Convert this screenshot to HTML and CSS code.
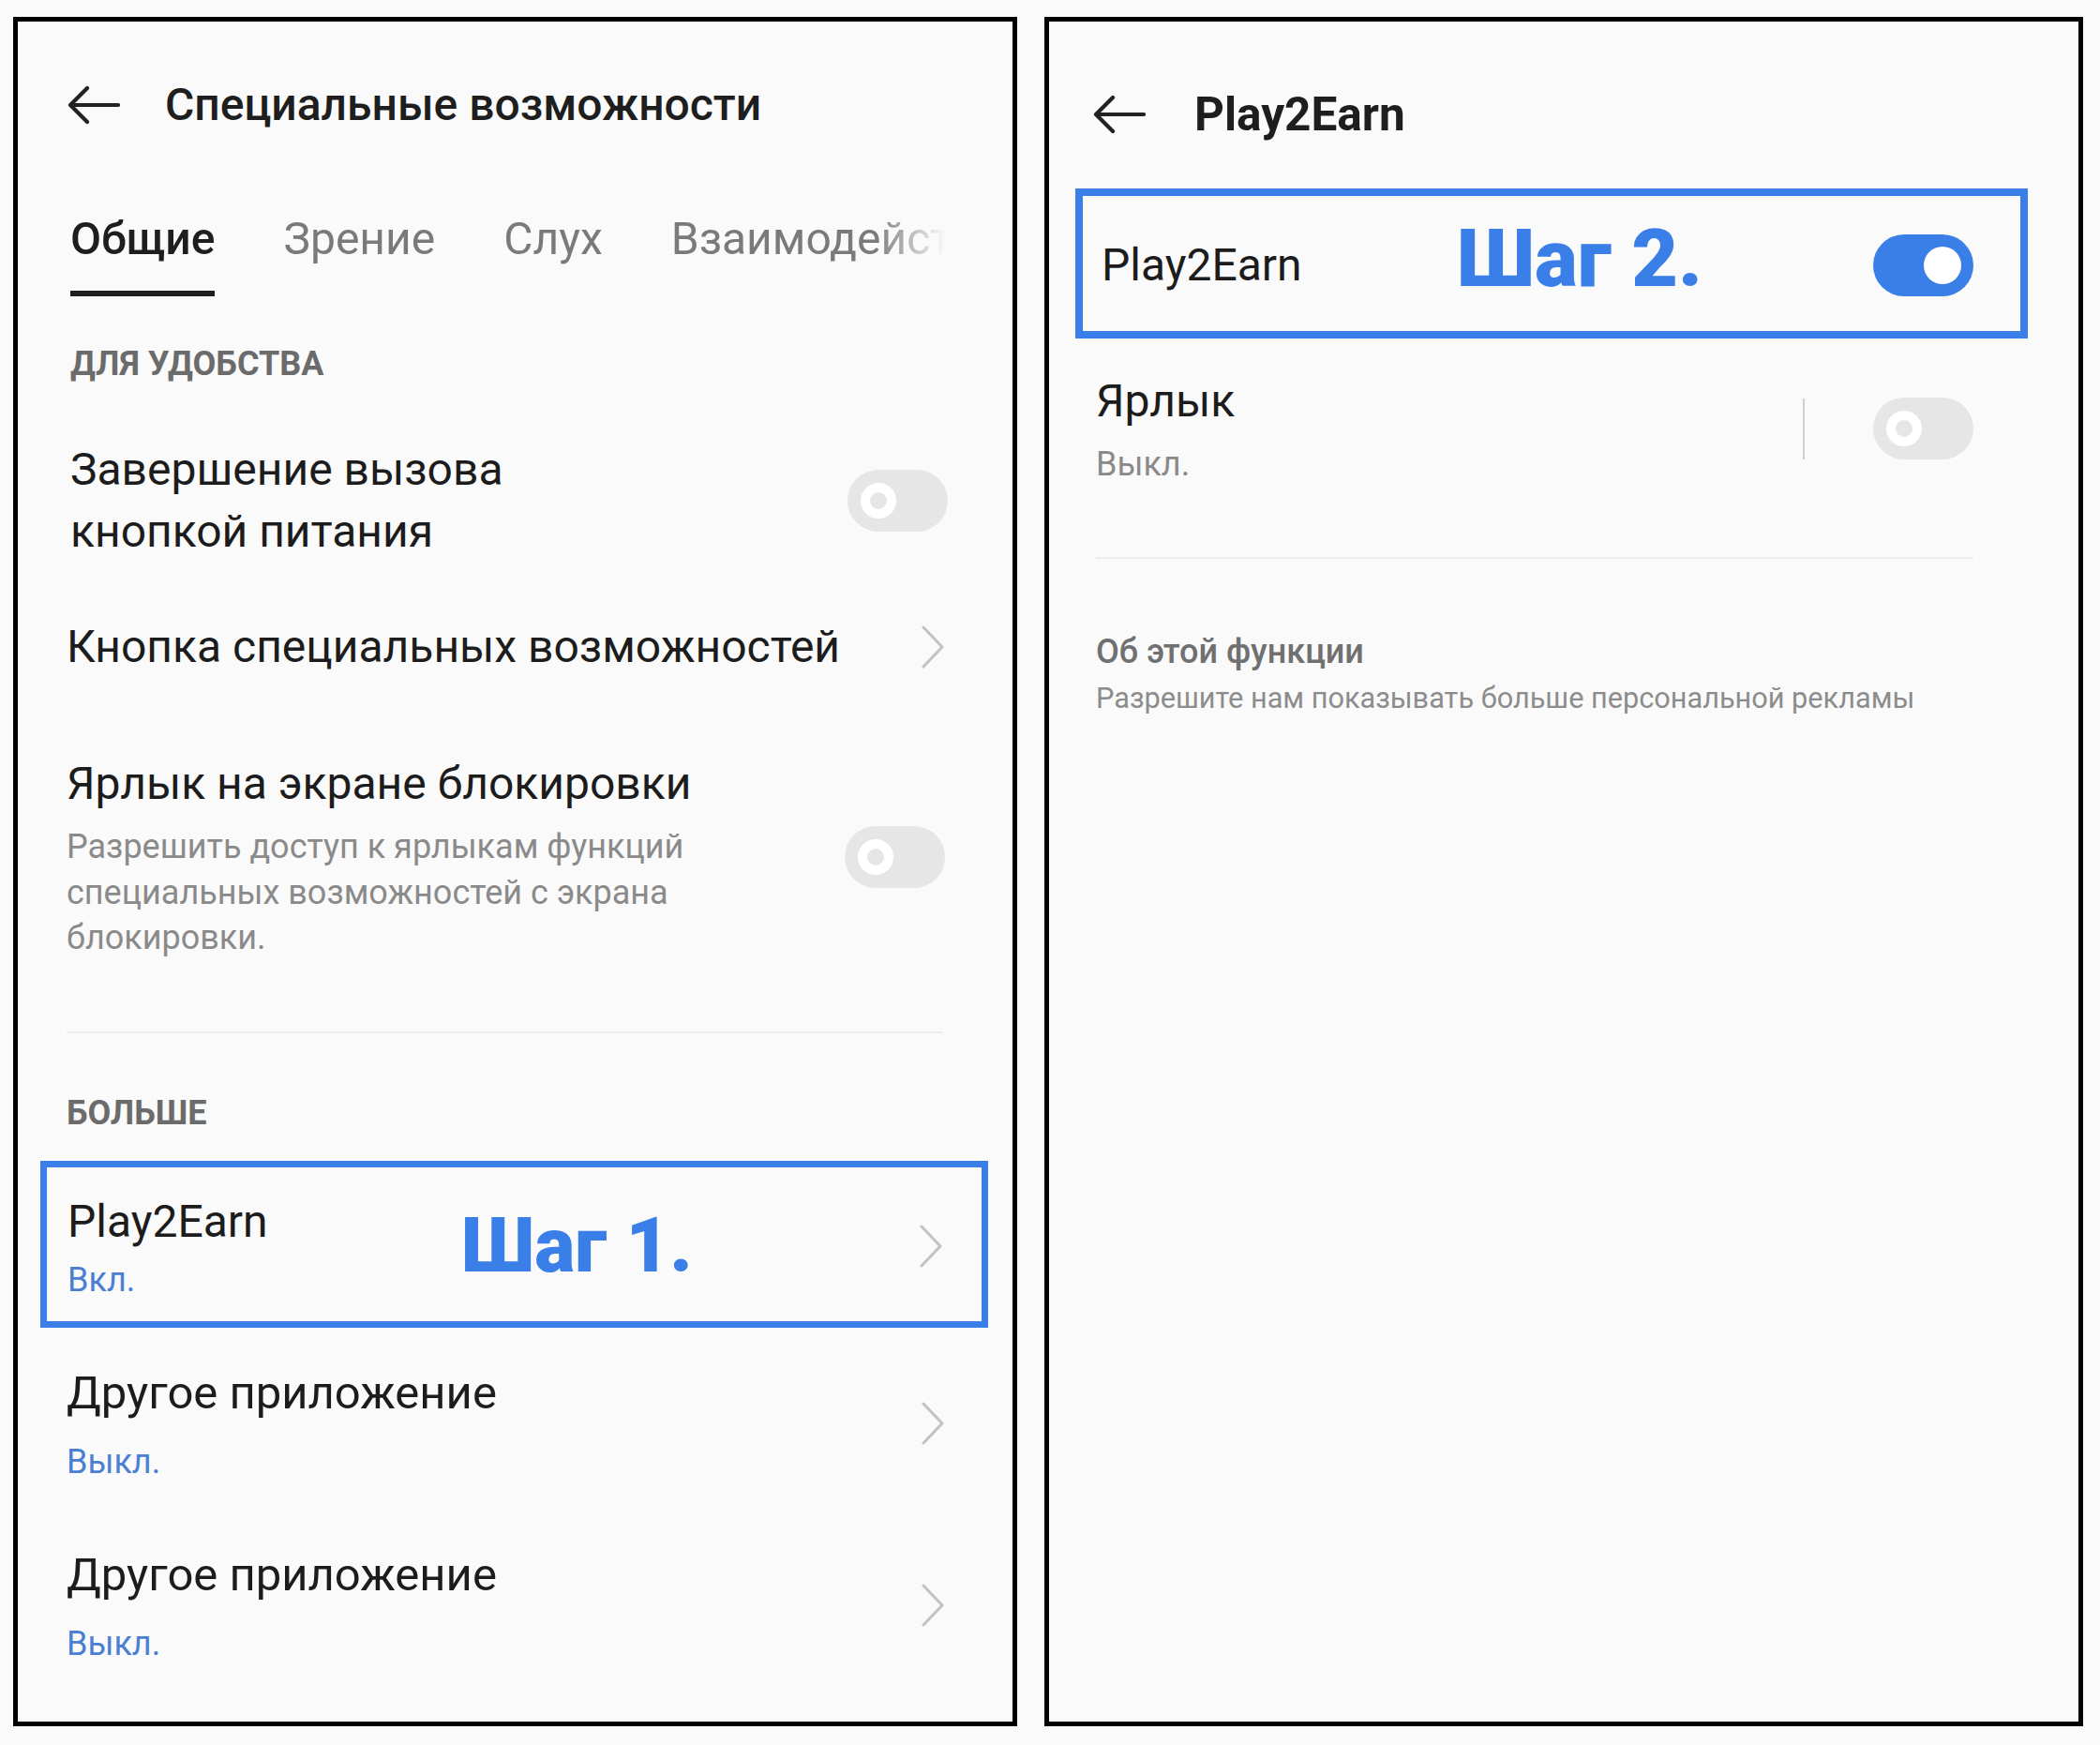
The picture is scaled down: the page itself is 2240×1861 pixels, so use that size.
FILE: index.html
```html
<!DOCTYPE html>
<html lang="ru">
<head>
<meta charset="utf-8">
<title>Play2Earn</title>
<link rel="stylesheet" href="styles.css">
</head>
<body>
<div class="page">
  <section class="panel panel-left">
    <header class="appbar appbar-left">
      <svg class="back" width="56" height="42" viewBox="0 0 56 42"><path d="M54 21H4M21 3L3 21L21 39" fill="none" stroke="#222" stroke-width="4.2" stroke-linecap="round" stroke-linejoin="round"/></svg>
      <h1 class="title title-left">Специальные возможности</h1>
    </header>
    <div class="content content-left">
      <nav class="tabs">
        <span class="tab active">Общие</span>
        <span class="tab">Зрение</span>
        <span class="tab">Слух</span>
        <span class="tab">Взаимодействие</span>
      </nav>

      <div class="section-label label-convenience">ДЛЯ УДОБСТВА</div>

      <div class="row row-power">
        <div class="item-title">Завершение вызова<br>кнопкой питания</div>
        <span class="switch"><span class="knob"></span></span>
      </div>

      <div class="row row-button">
        <div class="item-title">Кнопка специальных возможностей</div>
        <svg class="chev" width="26" height="46" viewBox="0 0 26 46"><polyline points="3,2 23,23 3,44" fill="none" stroke="#c2c2c2" stroke-width="3" stroke-linecap="round" stroke-linejoin="round"/></svg>
      </div>

      <div class="row row-lock">
        <div class="row-text">
          <div class="item-title">Ярлык на экране блокировки</div>
          <div class="desc">Разрешить доступ к ярлыкам функций<br>специальных возможностей с экрана<br>блокировки.</div>
        </div>
        <span class="switch"><span class="knob"></span></span>
      </div>

      <div class="separator sep-left"></div>

      <div class="section-label label-more">БОЛЬШЕ</div>

      <div class="row step-box step-one">
        <div class="row-text">
          <div class="item-title">Play2Earn</div>
          <div class="sub sub-blue sub-box">Вкл.</div>
        </div>
        <svg class="chev" width="26" height="46" viewBox="0 0 26 46"><polyline points="3,2 23,23 3,44" fill="none" stroke="#c2c2c2" stroke-width="3" stroke-linecap="round" stroke-linejoin="round"/></svg>
        <span class="step-label step-label-one">Шаг 1.</span>
      </div>

      <div class="row row-other row-other-1">
        <div class="row-text">
          <div class="item-title other-title">Другое приложение</div>
          <div class="sub sub-blue">Выкл.</div>
        </div>
        <svg class="chev" width="26" height="46" viewBox="0 0 26 46"><polyline points="3,2 23,23 3,44" fill="none" stroke="#c2c2c2" stroke-width="3" stroke-linecap="round" stroke-linejoin="round"/></svg>
      </div>

      <div class="row row-other row-other-2">
        <div class="row-text">
          <div class="item-title other-title">Другое приложение</div>
          <div class="sub sub-blue">Выкл.</div>
        </div>
        <svg class="chev" width="26" height="46" viewBox="0 0 26 46"><polyline points="3,2 23,23 3,44" fill="none" stroke="#c2c2c2" stroke-width="3" stroke-linecap="round" stroke-linejoin="round"/></svg>
      </div>
    </div>
  </section>

  <section class="panel panel-right">
    <header class="appbar appbar-right">
      <svg class="back" width="56" height="42" viewBox="0 0 56 42"><path d="M54 21H4M21 3L3 21L21 39" fill="none" stroke="#222" stroke-width="4.2" stroke-linecap="round" stroke-linejoin="round"/></svg>
      <h1 class="title title-right">Play2Earn</h1>
    </header>
    <div class="content content-right">
      <div class="row step-box step-two">
        <div class="item-title">Play2Earn</div>
        <span class="switch switch-on"><span class="knob"></span></span>
        <span class="step-label step-label-two">Шаг 2.</span>
      </div>

      <div class="row row-shortcut">
        <div class="row-text">
          <div class="item-title">Ярлык</div>
          <div class="sub sub-gray">Выкл.</div>
        </div>
        <div class="switch-group">
          <span class="vdivider"></span>
          <span class="switch"><span class="knob"></span></span>
        </div>
      </div>

      <div class="separator sep-right"></div>

      <div class="about-title">Об этой функции</div>
      <div class="about-text">Разрешите нам показывать больше персональной рекламы</div>
    </div>
  </section>
</div>
</body>
</html>
```

FILE: styles.css
```css
* {
  box-sizing: border-box;
  margin: 0;
  padding: 0;
}

html,
body {
  background: #fafafa;
}

body {
  font-family: Roboto, "Noto Sans", sans-serif;
  color: #1c1c1c;
}

.page {
  display: flex;
  gap: 29px;
  width: 2240px;
  height: 1861px;
  padding: 18px 0 0 14px;
}

.panel {
  height: 1823px;
  border: 5px solid #000;
  background: #fafafa;
  overflow: hidden;
}

.panel-left {
  width: 1071px;
}

.panel-right {
  width: 1108px;
}

/* app bar */
.appbar {
  display: flex;
  align-items: center;
}

.appbar-left {
  height: 177px;
  padding-left: 53px;
}

.appbar-right {
  height: 178px;
  padding-top: 20px;
  padding-left: 47px;
}

.back {
  display: block;
  flex: none;
}

.title {
  font-size: 48px;
  line-height: 60px;
  color: #1e1e1e;
}

.title-left {
  margin-left: 48px;
  font-weight: 500;
}

.title-right {
  margin-left: 52px;
  font-size: 49.5px;
  font-weight: 700;
}

/* content columns */
.content-left {
  padding: 0 72px 0 52px;
}

.content-right {
  padding: 0 112px 0 50px;
}

/* tabs */
.tabs {
  display: flex;
  gap: 73px;
  margin-top: 23px;
  padding-left: 4px;
  overflow: hidden;
  white-space: nowrap;
  -webkit-mask-image: linear-gradient(to right, #000 calc(100% - 75px), transparent 100%);
  mask-image: linear-gradient(to right, #000 calc(100% - 75px), transparent 100%);
}

.tab {
  flex: none;
  font-size: 48px;
  line-height: 64px;
  padding-bottom: 23px;
  border-bottom: 6px solid transparent;
  color: #7a7a7a;
}

.tab.active {
  color: #1e1e1e;
  font-weight: 500;
  border-bottom-color: #1e1e1e;
}

/* section labels */
.section-label {
  font-size: 36px;
  line-height: 50px;
  font-weight: 700;
  color: #6b6b6b;
}

.label-convenience {
  margin-top: 47px;
  margin-left: 4px;
}

.label-more {
  margin-top: 60px;
}

/* rows */
.row {
  display: flex;
  align-items: center;
  justify-content: space-between;
}

.item-title {
  font-size: 48px;
  line-height: 66px;
  color: #1c1c1c;
}

.other-title {
  font-size: 49px;
}

.row-power {
  margin-top: 55px;
  padding-left: 4px;
  margin-right: -3px;
}

.row-button {
  margin-top: 57px;
}

.row-lock {
  margin-top: 80px;
}

.desc {
  margin-top: 10px;
  font-size: 36px;
  line-height: 48.5px;
  color: #8a8a8a;
}

.sub {
  font-size: 36px;
  line-height: 48px;
}

.sub-blue {
  color: #4a7fd2;
}

.sub-gray {
  color: #8a8a8a;
}

.chev {
  display: block;
  flex: none;
}

.separator {
  height: 2px;
  background: #ececec;
}

.sep-left {
  margin-top: 75px;
  margin-right: 2px;
}

.sep-right {
  margin-top: 75px;
}

/* highlighted boxes */
.step-box {
  position: relative;
  border-style: solid;
  border-color: #3a7ee8;
}

.step-one {
  margin: 26px -46px 0 -28px;
  border-width: 7px;
  padding: 25px 41px 20.6px 22px;
}

.sub-box {
  margin-top: 5px;
}

.step-two {
  height: 160px;
  margin: 0 -58px 0 -22px;
  border-width: 8px;
  padding: 3px 50px 0 20px;
}

.step-label {
  position: absolute;
  font-weight: 900;
  color: #3a7ee8;
  white-space: nowrap;
}

.step-label-one {
  left: 442px;
  top: 43px;
  font-size: 81px;
  line-height: 81px;
}

.step-label-two {
  left: 399px;
  top: 24px;
  font-size: 86px;
  line-height: 86px;
}

/* other rows */
.row-other-1 {
  margin-top: 37px;
}

.row-other-2 {
  margin-top: 64px;
}

.row-other .sub {
  margin-top: 16px;
}

/* switches */
.switch {
  position: relative;
  display: block;
  flex: none;
  width: 107px;
  height: 66px;
  border-radius: 33px;
  background: #e6e6e6;
}

.switch .knob {
  position: absolute;
  left: 14px;
  top: 14px;
  width: 38px;
  height: 38px;
  border-radius: 50%;
  border: 10px solid #fff;
  background: #e6e6e6;
}

.switch-on {
  background: #3a7ee8;
}

.switch-on .knob {
  left: auto;
  right: 13px;
  top: 13px;
  width: 40px;
  height: 40px;
  border: 0;
  background: #fff;
}

/* shortcut row */
.row-shortcut {
  margin-top: 34px;
}

.row-shortcut .sub {
  margin-top: 10px;
}

.switch-group {
  display: flex;
  align-items: center;
  gap: 73px;
}

.vdivider {
  display: block;
  width: 2px;
  height: 65px;
  background: #cfcfcf;
}

/* about */
.about-title {
  margin-top: 75px;
  font-size: 36px;
  line-height: 48px;
  font-weight: 500;
  color: #707070;
}

.about-text {
  margin-top: 4px;
  font-size: 30.7px;
  line-height: 44px;
  color: #8c8c8c;
}
```
